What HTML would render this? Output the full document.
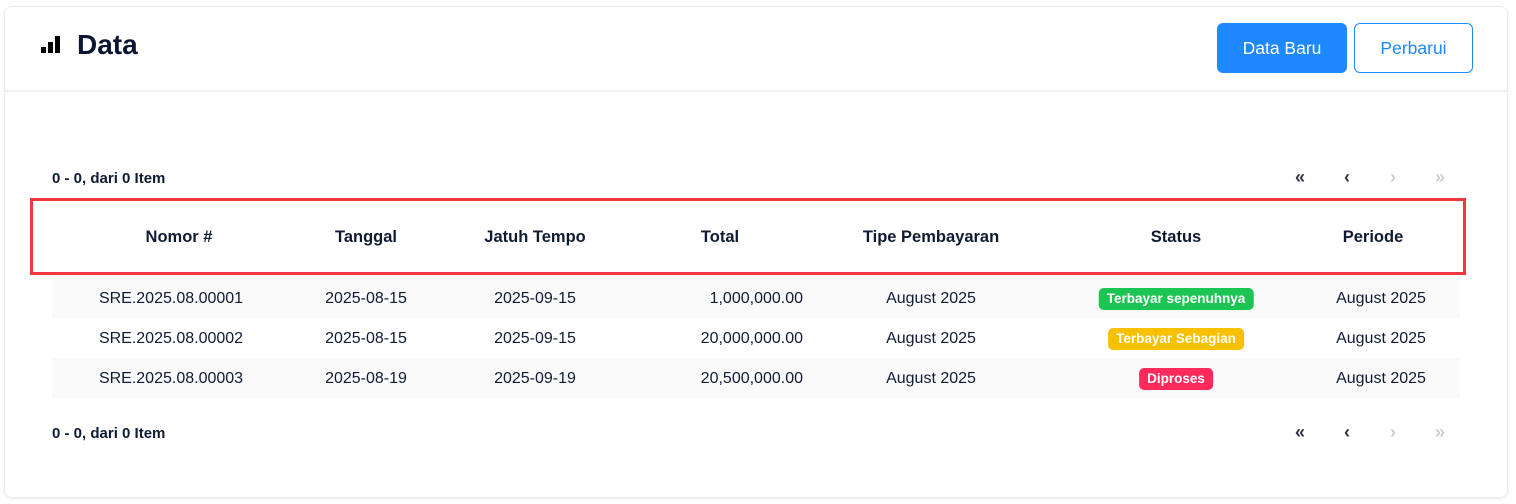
<!DOCTYPE html>
<html><head><style>
body{margin:0;width:1516px;height:504px;background:#fff;font-family:"Liberation Sans",sans-serif;color:#0f1b33;position:relative;overflow:hidden}
.card{position:absolute;left:4px;top:6px;width:1502px;height:490px;border:1px solid #ececec;border-radius:8px;box-shadow:0 1px 3px rgba(0,0,0,.08)}
.sep{position:absolute;left:5px;top:90px;width:1502px;height:2px;background:#f0f0f0}
.a{position:absolute;white-space:nowrap}
.btn{position:absolute;top:23px;height:50px;border-radius:6px;font-size:17.5px;line-height:51px;text-align:center}
.row{position:absolute;left:52px;width:1408px;height:40px}
.c{position:absolute;transform:translateX(-50%);font-size:16px;line-height:41px;white-space:nowrap}
.h{position:absolute;transform:translateX(-50%);font-size:16.5px;font-weight:bold;top:228px;white-space:nowrap}
.badge{position:absolute;transform:translateX(-50%);top:10px;height:22px;line-height:22px;padding:0 8px;border-radius:5px;color:#fff;font-weight:bold;font-size:13.5px}
.pg{position:absolute;font-size:18px;font-weight:bold}
</style></head><body>
<div class="card"></div><div class="sep"></div>
<svg class="a" style="left:41px;top:36px" width="20" height="18"><rect x="0" y="11" width="5" height="6" fill="#000"/><rect x="7" y="6" width="5" height="11" fill="#000"/><rect x="14" y="0" width="5" height="17" fill="#000"/></svg>
<div class="a" style="left:77px;top:29px;font-size:28px;font-weight:bold;color:#0a1633">Data</div>
<div class="btn" style="left:1217px;width:130px;background:#1e88ff;color:#fff">Data Baru</div>
<div class="btn" style="left:1354px;width:117px;border:1px solid #1e88ff;height:48px;line-height:49px;color:#1e88ff">Perbarui</div>
<div class="a" style="left:52px;top:170px;font-size:15px;font-weight:bold">0 - 0, dari 0 Item</div>
<div class="a" style="left:52px;top:425px;font-size:15px;font-weight:bold">0 - 0, dari 0 Item</div>
<div class="pg" style="left:1295px;top:167px;color:#334">«</div><div class="pg" style="left:1344px;top:167px;color:#334">‹</div><div class="pg" style="left:1390px;top:167px;color:#ccd">›</div><div class="pg" style="left:1435px;top:167px;color:#ccd">»</div>
<div class="pg" style="left:1295px;top:422px;color:#334">«</div><div class="pg" style="left:1344px;top:422px;color:#334">‹</div><div class="pg" style="left:1390px;top:422px;color:#ccd">›</div><div class="pg" style="left:1435px;top:422px;color:#ccd">»</div>
<div class="a" style="left:30px;top:198px;width:1430px;height:71px;border:3px solid #f0383e"></div>
<div class="h" style="left:179px">Nomor #</div><div class="h" style="left:366px">Tanggal</div><div class="h" style="left:535px">Jatuh Tempo</div><div class="h" style="left:720px">Total</div><div class="h" style="left:931px">Tipe Pembayaran</div><div class="h" style="left:1176px">Status</div><div class="h" style="left:1373px">Periode</div>
<div class="row" style="top:278px;background:#fafafa">
<div class="c" style="left:119px">SRE.2025.08.00001</div><div class="c" style="left:314px">2025-08-15</div><div class="c" style="left:483px">2025-09-15</div><div class="c" style="left:751px;transform:translateX(-100%)">1,000,000.00</div><div class="c" style="left:879px">August 2025</div><div class="badge" style="left:1124px;background:#1cc453">Terbayar sepenuhnya</div><div class="c" style="left:1329px">August 2025</div></div>
<div class="row" style="top:318px">
<div class="c" style="left:119px">SRE.2025.08.00002</div><div class="c" style="left:314px">2025-08-15</div><div class="c" style="left:483px">2025-09-15</div><div class="c" style="left:751px;transform:translateX(-100%)">20,000,000.00</div><div class="c" style="left:879px">August 2025</div><div class="badge" style="left:1124px;background:#f7c000">Terbayar Sebagian</div><div class="c" style="left:1329px">August 2025</div></div>
<div class="row" style="top:358px;background:#fafafa">
<div class="c" style="left:119px">SRE.2025.08.00003</div><div class="c" style="left:314px">2025-08-19</div><div class="c" style="left:483px">2025-09-19</div><div class="c" style="left:751px;transform:translateX(-100%)">20,500,000.00</div><div class="c" style="left:879px">August 2025</div><div class="badge" style="left:1124px;background:#ff2a5c">Diproses</div><div class="c" style="left:1329px">August 2025</div></div>
</body></html>
